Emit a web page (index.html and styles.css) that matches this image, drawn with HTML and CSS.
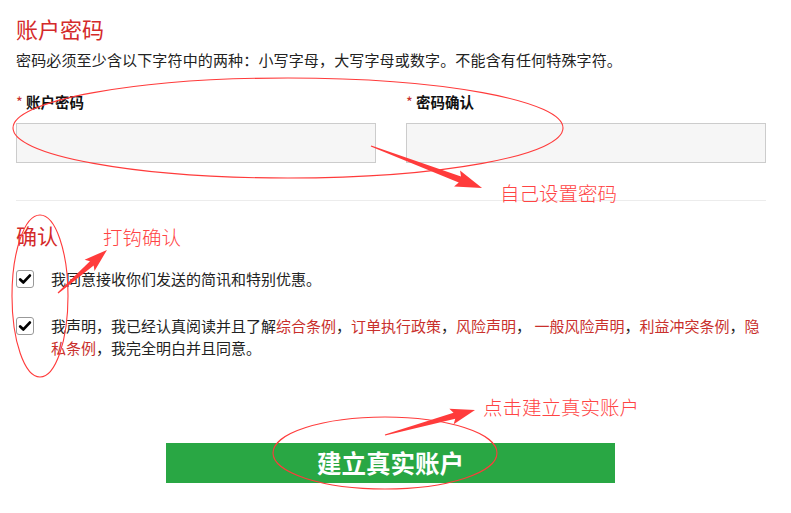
FILE: index.html
```html
<!DOCTYPE html>
<html lang="zh-CN">
<head>
<meta charset="utf-8">
<title>账户密码</title>
<link rel="stylesheet" href="styles.css">
</head>
<body>
<div class="page">
  <h1 class="title">账户密码</h1>
  <p class="desc">密码必须至少含以下字符中的两种：小写字母，大写字母或数字。不能含有任何特殊字符。</p>
  <div class="fields">
    <div class="field">
      <label class="label"><span class="req">*</span> 账户密码</label>
      <div class="input"></div>
    </div>
    <div class="field">
      <label class="label"><span class="req">*</span> 密码确认</label>
      <div class="input"></div>
    </div>
  </div>
  <div class="divider"></div>
  <h2 class="title2">确认</h2>
  <div class="check-row">
    <span class="box"><svg width="14" height="14" viewBox="0 0 14 14"><path d="M2.2 7.4 L5.4 10.4 L11.8 3.6" fill="none" stroke="#000" stroke-width="2.8" stroke-linecap="round" stroke-linejoin="round"/></svg></span>
    <span class="check-text">我同意接收你们发送的简讯和特别优惠。</span>
  </div>
  <div class="check-row second">
    <span class="box"><svg width="14" height="14" viewBox="0 0 14 14"><path d="M2.2 7.4 L5.4 10.4 L11.8 3.6" fill="none" stroke="#000" stroke-width="2.8" stroke-linecap="round" stroke-linejoin="round"/></svg></span>
    <p class="check-text">我声明，我已经认真阅读并且了解<span class="lnk">综合条例</span>，<span class="lnk">订单执行政策</span>，<span class="lnk">风险声明</span>，<span class="lnk"> 一般风险声明</span>，<span class="lnk">利益冲突条例</span>，<span class="lnk">隐私条例</span>，我完全明白并且同意。</p>
  </div>
  <div class="btn-wrap"><button class="btn">建立真实账户</button></div>
</div>

<svg class="overlay" width="791" height="513" viewBox="0 0 791 513">
  <g fill="none" stroke="#ff3b3b" stroke-width="1.1">
    <ellipse cx="288" cy="128" rx="275" ry="50"/>
    <ellipse cx="40" cy="296" rx="28" ry="81"/>
    <ellipse cx="385" cy="453" rx="112" ry="36"/>
  </g>
  <g fill="#ff3b3b">
    <g transform="translate(371,146) rotate(20.7)">
      <polygon points="0,-0.6 95,-3.2 92,-8.5 118.7,0 92,8.5 95,3.2 0,0.6"/>
    </g>
    <g transform="translate(58,293) rotate(-41.3)">
      <polygon points="0,-0.6 45,-2.8 42,-7.5 65.2,0 42,7.5 45,2.8 0,0.6"/>
    </g>
    <g transform="translate(385,435) rotate(-15.5)">
      <polygon points="0,-0.6 72,-3.2 69,-8 93.4,0 69,8 72,3.2 0,0.6"/>
    </g>
  </g>
</svg>
<span class="note note1">自己设置密码</span>
<span class="note note2">打钩确认</span>
<span class="note note3">点击建立真实账户</span>
</body>
</html>
```

FILE: styles.css
```css
html, body {
  margin: 0;
  padding: 0;
  background: #fff;
}
body {
  position: relative;
  width: 791px;
  height: 513px;
  overflow: hidden;
  font-family: "Noto Sans CJK SC", "Noto Sans", sans-serif;
  color: #222;
}
.page {
  padding: 16px 0 0 16px;
  width: 750px;
}
.title {
  margin: 0;
  font-size: 22px;
  line-height: 24px;
  font-weight: normal;
  color: #d42a2a;
}
.desc {
  margin: 9px 0 0;
  font-size: 15px;
  line-height: 22px;
  color: #222;
  letter-spacing: 0.15px;
}
.fields {
  display: grid;
  grid-template-columns: 360px 360px;
  column-gap: 30px;
  margin-top: 20px;
}
.field {
  display: flex;
  flex-direction: column;
}
.label {
  font-size: 14.5px;
  line-height: 22px;
  font-weight: bold;
  color: #111;
}
.req {
  color: #c9302c;
  font-weight: normal;
}
.input {
  margin-top: 10px;
  height: 38px;
  background: #f6f6f6;
  border: 1px solid #ccc;
}
.divider {
  margin-top: 37px;
  height: 1px;
  background: #ececec;
}
.title2 {
  margin: 21px 0 0;
  font-size: 21px;
  line-height: 26px;
  font-weight: normal;
  color: #d42a2a;
}
.check-row {
  display: flex;
  align-items: flex-start;
  margin-top: 20px;
}
.check-row.second {
  margin-top: 25px;
}
.box {
  flex: none;
  width: 16px;
  height: 16px;
  margin-top: 2px;
  border: 1px solid #999;
  border-radius: 3px;
  background: #fff;
  display: flex;
  align-items: center;
  justify-content: center;
}
.check-text {
  margin: 0 0 0 17px;
  font-size: 15px;
  line-height: 22px;
  color: #222;
}
.lnk {
  color: #c9302c;
}
.btn-wrap {
  margin-top: 84px;
  padding-left: 150px;
}
.btn {
  display: block;
  width: 449px;
  height: 40px;
  border: none;
  padding: 0;
  background: #29a744;
  color: #fff;
  font-family: "Noto Sans CJK SC", sans-serif;
  font-size: 24.5px;
  font-weight: bold;
  line-height: 40px;
}
.overlay {
  position: absolute;
  left: 0;
  top: 0;
  pointer-events: none;
}
.note {
  position: absolute;
  font-size: 19.5px;
  line-height: 24px;
  font-weight: 300;
  color: #ff4444;
  white-space: nowrap;
}
.note1 { left: 500px; top: 181px; }
.note2 { left: 103px; top: 225px; }
.note3 { left: 483px; top: 395px; }
```
